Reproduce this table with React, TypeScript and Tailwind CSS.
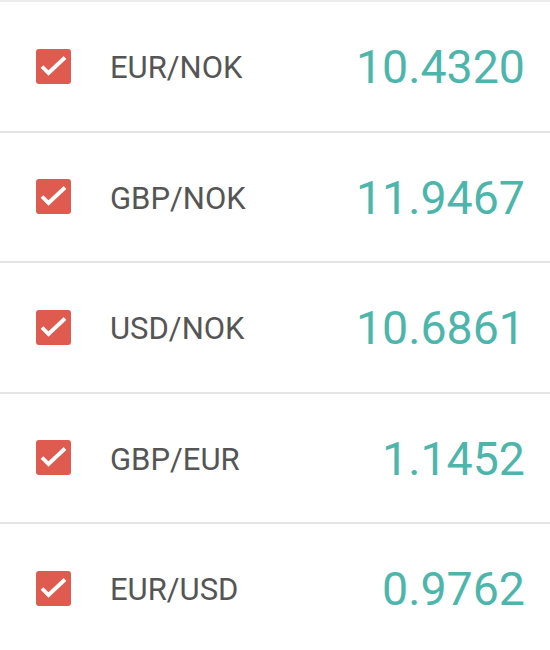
import React from "react";

const rates = [
  { pair: "EUR/NOK", value: "10.4320" },
  { pair: "GBP/NOK", value: "11.9467" },
  { pair: "USD/NOK", value: "10.6861" },
  { pair: "GBP/EUR", value: "1.1452" },
  { pair: "EUR/USD", value: "0.9762" },
];

function CheckBox() {
  return (
    <div className="w-[35px] h-[35px] rounded-[3px] bg-[#df5a4f] shrink-0">
      <svg width="35" height="35" viewBox="0 0 35 35" fill="none">
        <path d="M6 17.5l6.5 6.5L29 8.5" stroke="white" strokeWidth="3.8" strokeLinecap="butt" />
      </svg>
    </div>
  );
}

export default function App() {
  return (
    <div className="w-[550px] h-[650px] bg-white border-t-2 border-[#ececec] overflow-hidden font-['Roboto',sans-serif]">
      {rates.map((r) => (
        <div
          key={r.pair}
          className="h-[130.5px] flex items-center border-b-2 border-[#e4e4e4] pl-[36px] pr-[25px]"
        >
          <CheckBox />
          <span className="ml-[39px] pt-[4px] text-[31px] text-[#555555] flex-1">{r.pair}</span>
          <span className="pt-[4px] text-[46.5px] text-[#4db6ac]">{r.value}</span>
        </div>
      ))}
    </div>
  );
}
